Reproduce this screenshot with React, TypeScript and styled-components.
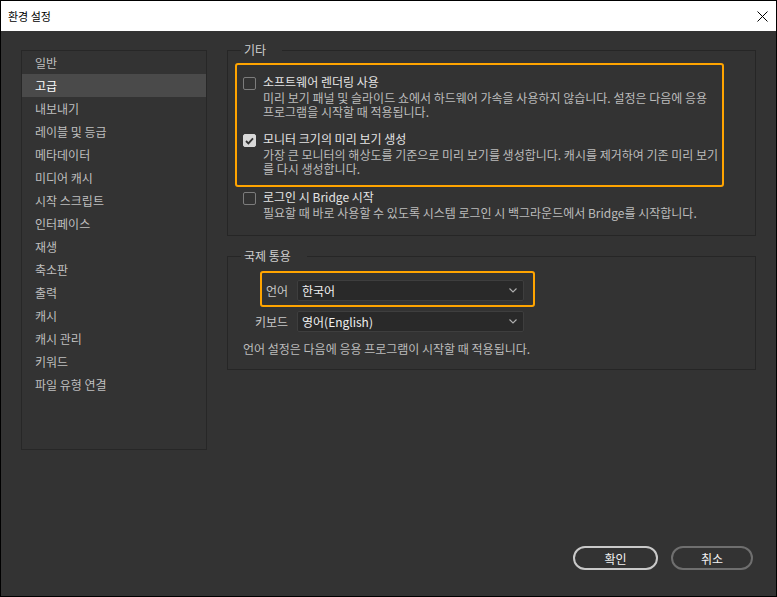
import styled, { createGlobalStyle } from 'styled-components'

const GlobalStyle = createGlobalStyle`
  html, body {
    margin: 0;
    padding: 0;
    background: #333333;
  }
  body {
    font-family: "Noto Sans CJK KR", "Noto Sans", sans-serif;
  }
  * {
    box-sizing: border-box;
  }
`

const Window = styled.div`
  width: 777px;
  height: 597px;
  border: 1px solid #000;
  display: flex;
  flex-direction: column;
  background: #333333;
`

const TitleBar = styled.div`
  height: 30px;
  flex-shrink: 0;
  background: #fff;
  display: flex;
  align-items: center;
  justify-content: space-between;
  padding: 0 8px 0 7px;
  font-size: 11px;
  color: #000;
`

const CloseButton = styled.div`
  width: 11px;
  height: 11px;
  display: flex;
`

const Main = styled.div`
  flex: 1;
  display: flex;
  align-items: flex-start;
  gap: 20px;
  padding: 11px 0 0 20px;
`

const Sidebar = styled.ul`
  list-style: none;
  margin: 8px 0 0;
  padding: 0;
  width: 186px;
  height: 400px;
  border: 1px solid #272727;
`

const NavItem = styled.li<{ $active?: boolean }>`
  height: 23px;
  line-height: 23px;
  padding-left: 13px;
  font-size: 12px;
  color: ${(p) => (p.$active ? '#ffffff' : '#bfbfbf')};
  background: ${(p) => (p.$active ? '#4a4a4a' : 'transparent')};
`

const Content = styled.div`
  width: 529px;
  display: flex;
  flex-direction: column;
`

const Group = styled.section<{ $gap?: number }>`
  margin-top: ${(p) => p.$gap ?? 0}px;
  display: flex;
  flex-direction: column;
`

const GroupHeader = styled.div`
  height: 16px;
  display: flex;
  font-size: 12px;
  line-height: 16px;
  color: #cfcfcf;

  &::before {
    content: '';
    width: 13px;
    margin-top: 8px;
    border-top: 1px solid #262626;
    border-left: 1px solid #262626;
  }

  &::after {
    content: '';
    flex: 1;
    margin-top: 8px;
    border-top: 1px solid #262626;
    border-right: 1px solid #262626;
  }
`

const GroupTitle = styled.span`
  padding: 0 16px 0 3px;
`

const GroupBody = styled.div<{ $pad: string }>`
  border: 1px solid #262626;
  border-top: none;
  padding: ${(p) => p.$pad};
  display: flex;
  flex-direction: column;
`

const Highlight = styled.div<{ $pad: string; $ml: number; $mt: number; $w: number }>`
  border: 2px solid #ffa400;
  border-radius: 3px;
  width: ${(p) => p.$w}px;
  margin-left: ${(p) => p.$ml}px;
  margin-top: ${(p) => p.$mt}px;
  padding: ${(p) => p.$pad};
  display: flex;
  flex-direction: column;
`

const Option = styled.div<{ $mt?: number; $ml?: number }>`
  display: flex;
  gap: 7px;
  margin-top: ${(p) => p.$mt ?? 0}px;
  margin-left: ${(p) => p.$ml ?? 0}px;
`

const Box = styled.div<{ $checked?: boolean }>`
  width: 13px;
  height: 13px;
  margin-top: 2px;
  flex-shrink: 0;
  border-radius: 2px;
  border: 1px solid ${(p) => (p.$checked ? '#d8d8d8' : '#7c7c7c')};
  background: ${(p) => (p.$checked ? '#d8d8d8' : 'transparent')};
  display: flex;
  align-items: center;
  justify-content: center;
`

const OptionText = styled.div`
  display: flex;
  flex-direction: column;
  font-size: 12px;
  line-height: 14px;
`

const OptionLabel = styled.div`
  color: #e4e4e4;
  margin-bottom: 2px;
  white-space: nowrap;
`

const OptionDesc = styled.div`
  color: #bcbcbc;
  white-space: nowrap;
`

const FieldRow = styled.div<{ $labelWidth: number; $ml: number; $mt?: number }>`
  display: flex;
  align-items: center;
  gap: 9px;
  margin-left: ${(p) => p.$ml}px;
  margin-top: ${(p) => p.$mt ?? 0}px;

  & > label {
    width: ${(p) => p.$labelWidth}px;
    text-align: right;
    font-size: 12px;
    color: #c8c8c8;
    white-space: nowrap;
  }
`

const Select = styled.div`
  width: 227px;
  height: 21px;
  border: 1px solid #3e3e3e;
  border-radius: 2px;
  background: #292929;
  display: flex;
  align-items: center;
  justify-content: space-between;
  padding: 0 6px 0 4px;
  font-size: 12px;
  color: #f0f0f0;
`

const Note = styled.div`
  margin: 10px 0 0 15px;
  font-size: 12px;
  line-height: 14px;
  color: #bcbcbc;
`

const Footer = styled.div`
  height: 50px;
  flex-shrink: 0;
  display: flex;
  justify-content: flex-end;
  gap: 13px;
  padding: 0 23px 26px 0;
`

const Button = styled.button<{ $primary?: boolean; $w: number }>`
  width: ${(p) => p.$w}px;
  height: 24px;
  border-radius: 12px;
  border: 2px solid ${(p) => (p.$primary ? '#c9c9c9' : '#6f6f6f')};
  background: transparent;
  color: #f2f2f2;
  font-family: inherit;
  font-size: 12px;
  padding: 0;
`

const Chevron = () => (
  <svg width="8" height="5" viewBox="0 0 8 5">
    <path d="M0.5 0.5 L4 4 L7.5 0.5" fill="none" stroke="#b0b0b0" strokeWidth="1.1" />
  </svg>
)

const Check = () => (
  <svg width="9" height="8" viewBox="0 0 9 8">
    <path d="M1 4 L3.4 6.4 L8 1.4" fill="none" stroke="#333" strokeWidth="1.8" />
  </svg>
)

const navItems = [
  '일반',
  '고급',
  '내보내기',
  '레이블 및 등급',
  '메타데이터',
  '미디어 캐시',
  '시작 스크립트',
  '인터페이스',
  '재생',
  '축소판',
  '출력',
  '캐시',
  '캐시 관리',
  '키워드',
  '파일 유형 연결',
]

const App = () => (
  <>
    <GlobalStyle />
    <Window>
      <TitleBar>
        <span>환경 설정</span>
        <CloseButton>
          <svg width="11" height="11" viewBox="0 0 11 11">
            <path d="M0.5 0.5 L10.5 10.5 M10.5 0.5 L0.5 10.5" stroke="#000" strokeWidth="1" />
          </svg>
        </CloseButton>
      </TitleBar>
      <Main>
        <Sidebar>
          {navItems.map((n) => (
            <NavItem key={n} $active={n === '고급'}>
              {n}
            </NavItem>
          ))}
        </Sidebar>
        <Content>
          <Group>
            <GroupHeader>
              <GroupTitle>기타</GroupTitle>
            </GroupHeader>
            <GroupBody $pad="0 0 15px 0">
              <Highlight $w={489} $ml={7} $mt={5} $pad="10px 6px 9px 6px">
                <Option>
                  <Box />
                  <OptionText>
                    <OptionLabel>소프트웨어 렌더링 사용</OptionLabel>
                    <OptionDesc>
                      미리 보기 패널 및 슬라이드 쇼에서 하드웨어 가속을 사용하지 않습니다. 설정은 다음에 응용
                      <br />
                      프로그램을 시작할 때 적용됩니다.
                    </OptionDesc>
                  </OptionText>
                </Option>
                <Option $mt={13}>
                  <Box $checked>
                    <Check />
                  </Box>
                  <OptionText>
                    <OptionLabel>모니터 크기의 미리 보기 생성</OptionLabel>
                    <OptionDesc>
                      가장 큰 모니터의 해상도를 기준으로 미리 보기를 생성합니다. 캐시를 제거하여 기존 미리 보기
                      <br />를 다시 생성합니다.
                    </OptionDesc>
                  </OptionText>
                </Option>
              </Highlight>
              <Option $mt={3} $ml={15}>
                <Box />
                <OptionText>
                  <OptionLabel>로그인 시 Bridge 시작</OptionLabel>
                  <OptionDesc>
                    필요할 때 바로 사용할 수 있도록 시스템 로그인 시 백그라운드에서 Bridge를 시작합니다.
                  </OptionDesc>
                </OptionText>
              </Option>
            </GroupBody>
          </Group>
          <Group $gap={12}>
            <GroupHeader>
              <GroupTitle>국제 통용</GroupTitle>
            </GroupHeader>
            <GroupBody $pad="0 0 13px 0">
              <Highlight $w={275} $ml={32} $mt={7} $pad="7px 0 4px 0">
                <FieldRow $labelWidth={26} $ml={0}>
                  <label>언어</label>
                  <Select>
                    <span>한국어</span>
                    <Chevron />
                  </Select>
                </FieldRow>
              </Highlight>
              <FieldRow $labelWidth={34} $ml={26} $mt={4}>
                <label>키보드</label>
                <Select>
                  <span>영어(English)</span>
                  <Chevron />
                </Select>
              </FieldRow>
              <Note>언어 설정은 다음에 응용 프로그램이 시작할 때 적용됩니다.</Note>
            </GroupBody>
          </Group>
        </Content>
      </Main>
      <Footer>
        <Button $primary $w={85}>
          확인
        </Button>
        <Button $w={82}>취소</Button>
      </Footer>
    </Window>
  </>
)

export default App
